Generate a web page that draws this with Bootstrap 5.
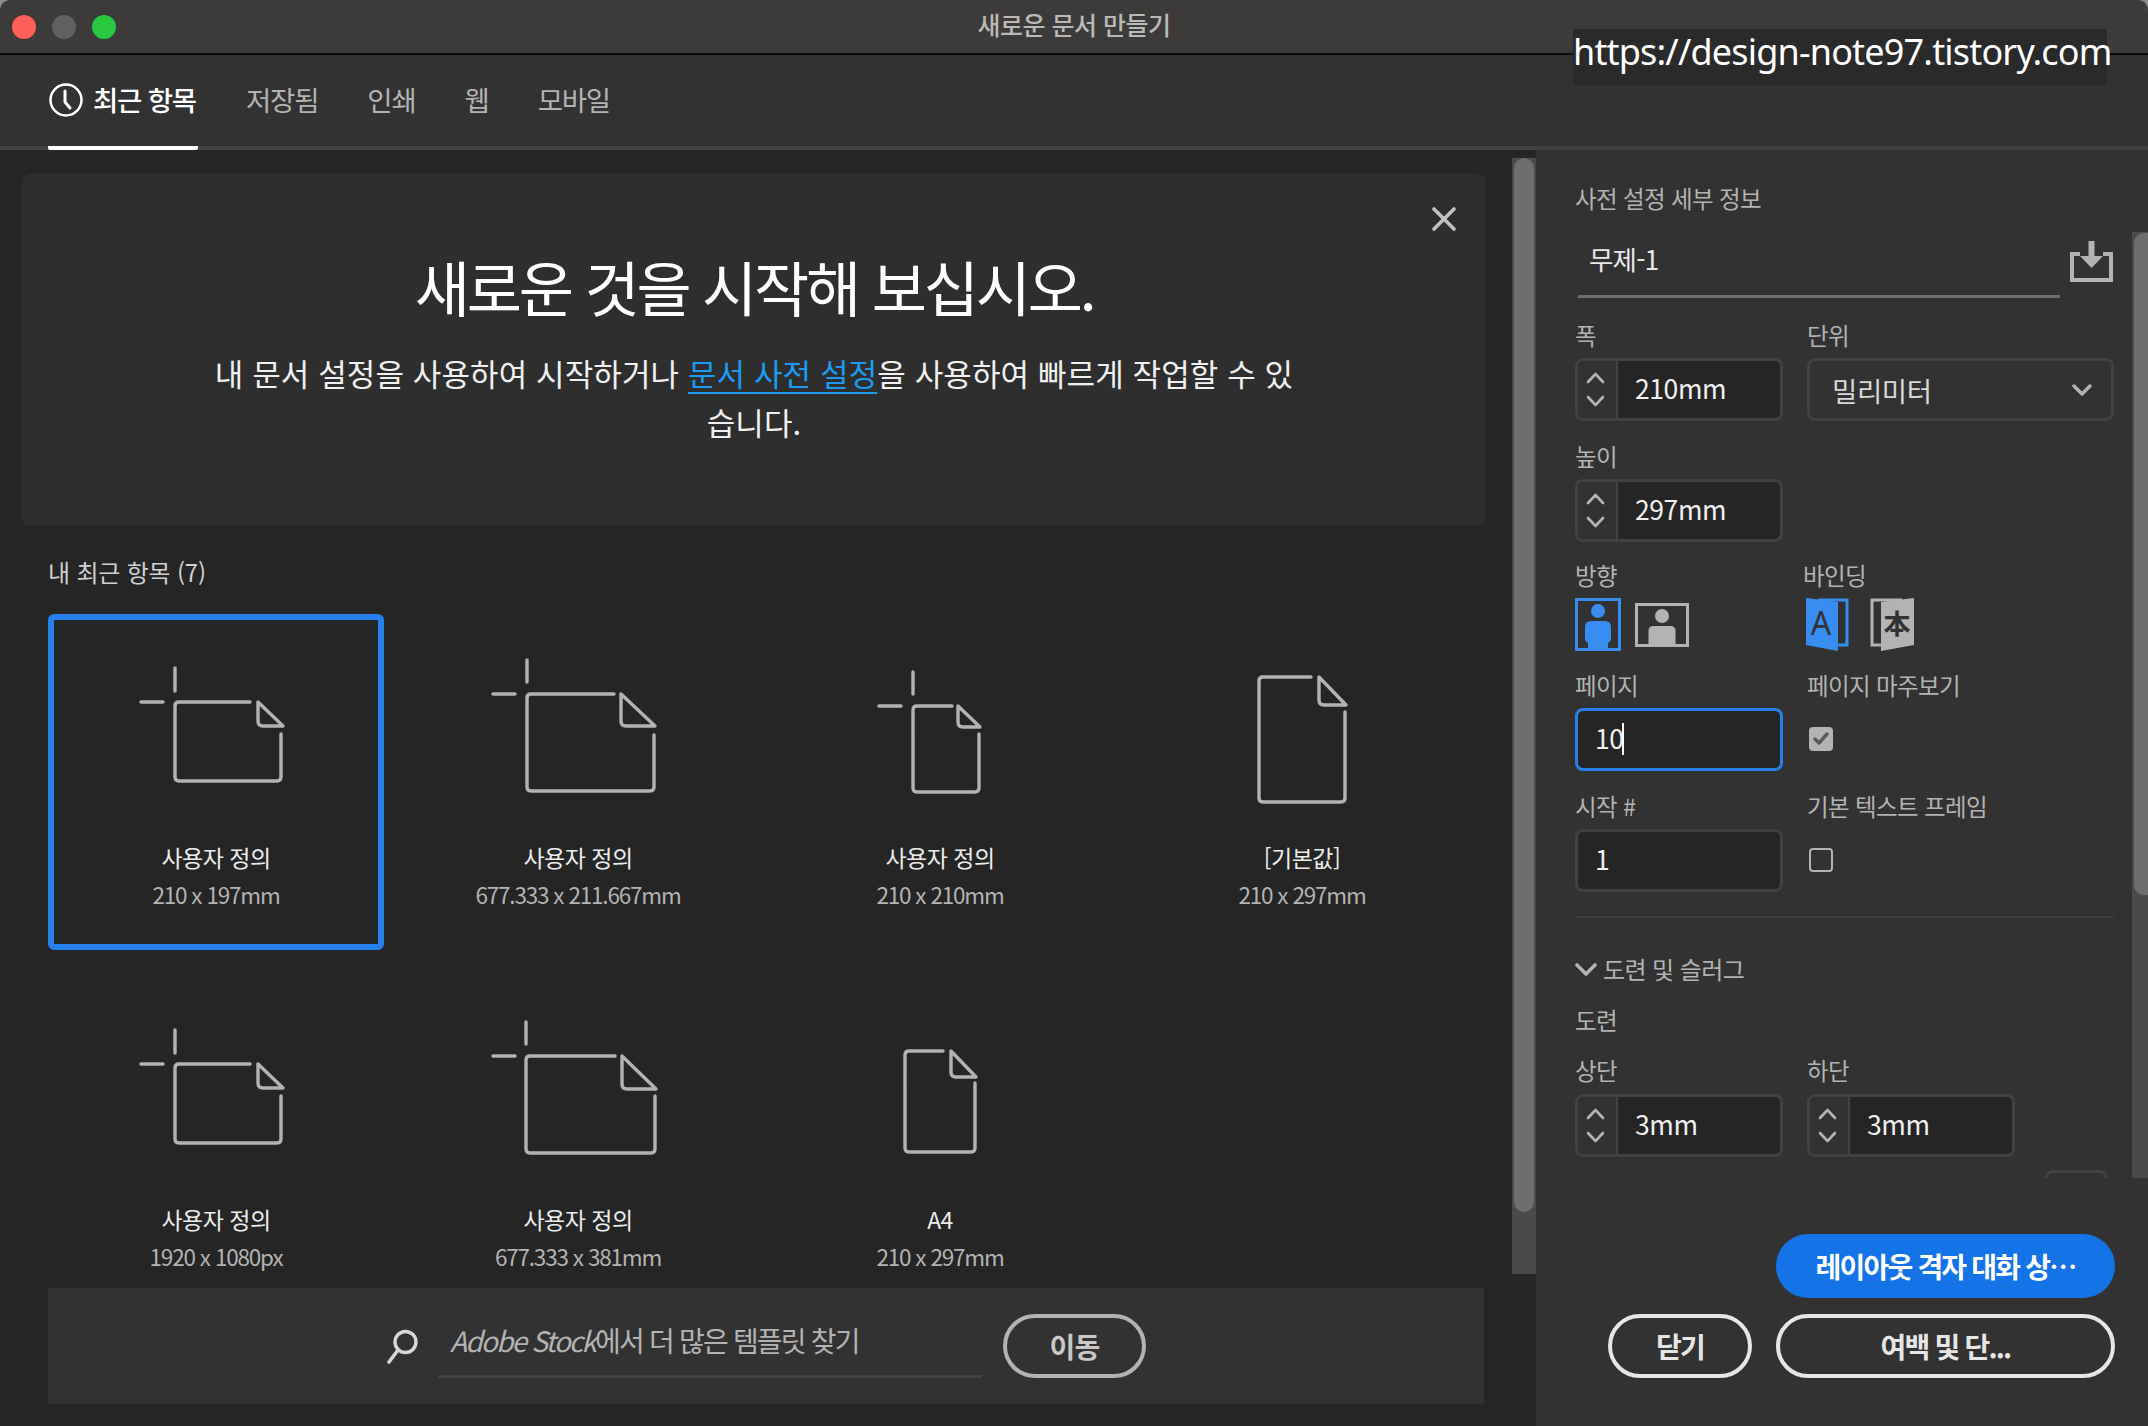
<!DOCTYPE html>
<html lang="ko">
<head>
<meta charset="utf-8">
<title>새로운 문서 만들기</title>
<link href="https://cdn.jsdelivr.net/npm/bootstrap@5.3.0/dist/css/bootstrap.min.css" rel="stylesheet">
<style>
html,body{height:1426px;overflow:hidden;background:#8a8a8a;}
body{font-family:"Noto Sans CJK KR","Noto Sans",sans-serif;color:#b3b3b3;}
.appwin{height:1426px;}
.titlebar{height:55px;background:#3c3b39;border-bottom:2px solid #0c0c0c;border-radius:10px 10px 0 0;padding-left:12px;gap:16px;}
.light{width:24px;height:24px;border-radius:50%;}
.l-red{background:#ff5f57;}.l-gray{background:#616161;}.l-green{background:#28c840;}
.wintitle{left:0;right:0;top:9px;text-align:center;font-size:25px;line-height:30px;font-weight:500;color:#b9b9b9;letter-spacing:-.5px;}
.stamp{top:29px;left:1573px;width:534px;height:56px;background:#2a2a2a;color:#fff;font-family:"Noto Sans",sans-serif;font-size:36px;line-height:46px;letter-spacing:-.82px;white-space:nowrap;text-align:center;}
.tabsbar{height:95px;background:#323232;border-bottom:4px solid #414141;padding-left:48px;}
.tabitem{height:95px;margin-bottom:-4px;font-size:27.5px;letter-spacing:-1.2px;color:#b3b3b3;margin-right:49px;gap:10px;padding-bottom:6px;}
.tabitem.on{color:#fff;border-bottom:4px solid #fff;border-radius:0 0 2px 2px;font-weight:500;margin-right:48px;padding-left:1px;padding-bottom:2px;width:150px;}
.mainrow{height:1276px;}
.leftside{width:1536px;background:#252525;}
.leftcol{width:1512px;}
.hero{margin:24px 26px 0 22px;height:352px;background:#2e2e2e;border-radius:8px;padding-top:77px;text-align:center;}
.hero h1{font-size:60px;line-height:70px;font-weight:400;color:#fff;letter-spacing:-3.2px;margin:0 0 27px;}
.hero p{font-size:31px;line-height:49px;color:#f0f0f0;margin:0;letter-spacing:.1px;}
.hero a{color:#1b9cf2;text-decoration-thickness:2px;text-underline-offset:6px;}
.closex{top:33px;right:30px;width:24px;height:24px;}
.recent{margin:31px 0 0 48px;font-size:24px;line-height:30px;letter-spacing:-.2px;color:#d0d0d0;}
.tplgrid{display:grid;grid-template-columns:repeat(4,336px);grid-auto-rows:336px;gap:26px;margin:27px 0 0 48px;height:674px;overflow:hidden;}
.tpl{border:6px solid transparent;border-radius:6px;text-align:center;}
.tpl.sel{border-color:#2680eb;}
.tpl svg{display:block;width:324px;height:206px;}
.tplname{font-size:23px;line-height:30px;color:#ececec;letter-spacing:-.5px;margin-top:16px;}
.tplsize{font-size:22.5px;line-height:30px;color:#b3b3b3;letter-spacing:-1.2px;margin-top:7px;}
.stockbar{position:absolute;left:48px;top:1138px;width:1436px;height:116px;background:#323232;}
.stockglass{margin-left:338px;flex:none;}
.stocktext{margin-left:16px;width:544px;height:64px;border-bottom:3px solid #414141;font-size:28px;letter-spacing:-1.8px;color:#b3b3b3;padding:0 0 0 12px;line-height:52px;}
.pillbtn{border-radius:32px;height:64px;font-weight:700;font-size:28px;letter-spacing:-1.8px;padding:0;line-height:1;flex:none;}
.pill-go{width:143px;margin-left:21px;border:4px solid #b3b3b3;color:#c8c8c8;background:transparent;letter-spacing:-.7px;}
.pill-line{border:4px solid #e6e6e6;color:#e6e6e6;background:transparent;}
.pill-blue{background:#1473e6;border:0;color:#fff;}
.lscroll{width:24px;margin-top:8px;height:1116px;background:#4a4a4a;}
.lthumb{height:1054px;background:#6e6e6e;border-radius:10px;margin:0 2px;}
.rightside{width:612px;background:#323232;}
.rform{height:1028px;overflow:hidden;padding-left:39px;width:596px;}
.rscroll{width:16px;margin-top:82px;height:946px;background:#4a4a4a;padding-left:2px;padding-top:1px;}
.rthumb{width:14px;height:662px;background:#6e6e6e;border-radius:10px 0 0 10px;}
.flabel{font-size:23.5px;line-height:30px;letter-spacing:-.6px;color:#b3b3b3;}
.presethead{margin-top:33px;}
.nameline{height:70px;margin-top:15px;}
.nameinput{width:482px;margin-left:3px;height:70px;border-bottom:3px solid #6e6e6e;padding-left:11px;font-size:26.5px;line-height:62px;color:#e8e8e8;letter-spacing:-.8px;}
.savebtn{width:43px;height:41px;margin-left:10px;margin-top:13px;flex:none;}
.fieldrow{display:grid;grid-template-columns:208px 307px;column-gap:24px;}
.fieldrow .flabel{margin-bottom:8px;}
.row-first{margin-top:22px;}
.row-orient{margin-top:18px;}
.row-page{margin-top:7px;}
.row-bleed{margin-top:20px;}
.row-bleed .flabel{margin-bottom:9px;}
.fbox{height:63px;border:3px solid #414141;border-radius:8px;background:#252525;display:flex;overflow:hidden;}
.fbox-short{width:208px;}
.stepper{width:40px;background:#323232;border-right:2px solid #414141;flex:none;}
.stepper svg{display:block;}
.fval{font-size:26.5px;line-height:54px;color:#f0f0f0;padding-left:17px;letter-spacing:-.4px;}
.fbox.focusbox{border-color:#2680eb;}
.caretmark{display:inline-block;width:2px;height:32px;background:#fff;vertical-align:-6px;margin-left:-2px;}
.selbox{background:transparent;padding:0 19px 0 22px;}
.selbox .fval{padding:0;font-size:27.5px;color:#d8d8d8;}
.pad-m{margin-top:20px;}
.iconrow{height:65px;margin-top:6px;}
.icon-land{margin-left:14px;margin-top:5px;}
.bind-label{margin-left:-4px;}
.icon-bind1{margin-left:-1px;}
.icon-bind2{margin-left:20px;}
.ckbox{width:24px;height:24px;border-radius:4px;margin:27px 0 0 2px;}
.ckon{background:#b3b3b3;}
.ckoff{border:2px solid #b3b3b3;}
.hrule{height:2px;background:#3e3e3e;margin:24px 0 0;width:539px;}
.section{margin-top:36px;color:#b3b3b3;font-size:24px;line-height:30px;letter-spacing:-.6px;gap:6px;}
.bleedhead{margin-top:21px;}
.stub{position:absolute;left:509px;top:1020px;width:63px;height:30px;border:3px solid #414141;border-radius:8px;background:#323232;}
.actions{padding:56px 33px 0 0;gap:16px;}
.w-main{width:339px;}
.w-close{width:144px;}
.actrow2{gap:24px;}
</style>
</head>
<body>
<div class="appwin d-flex flex-column position-relative">
  <div class="titlebar d-flex align-items-center flex-shrink-0 position-relative">
    <span class="light l-red"></span><span class="light l-gray"></span><span class="light l-green"></span>
    <div class="wintitle position-absolute">새로운 문서 만들기</div>
  </div>
  <div class="stamp position-absolute">https://design-note97.tistory.com</div>
  <div class="tabsbar d-flex align-items-start flex-shrink-0">
    <div class="tabitem on d-flex align-items-center">
      <svg width="34" height="34" viewBox="0 0 34 34" fill="none" stroke="#fff"><circle cx="17" cy="17" r="15.500" stroke-width="2.5"/><path d="M16 8v11l5 6" stroke-width="3" stroke-linecap="round" stroke-linejoin="round"/></svg>
      <span>최근 항목</span>
    </div>
    <div class="tabitem d-flex align-items-center">저장됨</div>
    <div class="tabitem d-flex align-items-center">인쇄</div>
    <div class="tabitem d-flex align-items-center">웹</div>
    <div class="tabitem d-flex align-items-center">모바일</div>
  </div>
  <div class="mainrow d-flex position-relative">
    <div class="leftside d-flex">
      <div class="leftcol position-relative">
        <div class="hero position-relative">
          <h1>새로운 것을 시작해 보십시오.</h1>
          <p>내 문서 설정을 사용하여 시작하거나 <a href="#">문서 사전 설정</a>을 사용하여 빠르게 작업할 수 있<br>습니다.</p>
          <svg class="closex position-absolute" viewBox="0 0 24 24" stroke="#c0c0c0" stroke-width="3.6" stroke-linecap="round"><path d="M2 2l20 20M22 2L2 22"/></svg>
        </div>
        <div class="recent">내 최근 항목 (7)</div>
        <div class="tplgrid">
          <div class="tpl sel">
            <svg viewBox="54 620 324 206" fill="none" stroke="#b3b3b3" stroke-width="3.4" stroke-linecap="round" stroke-linejoin="round"><path d="M175 668v23M141 702h22M250 702h-71q-4 0-4 4v71q0 4 4 4h98q4 0 4-4v-43M258 702v19q0 5 5 5h20z"/></svg>
            <div class="tplname">사용자 정의</div><div class="tplsize">210 x 197mm</div>
          </div>
          <div class="tpl">
            <svg viewBox="416 620 324 206" fill="none" stroke="#b3b3b3" stroke-width="3.4" stroke-linecap="round" stroke-linejoin="round"><path d="M527 660v22M493 694h22M614 694h-83q-4 0-4 4v89q0 4 4 4h119q4 0 4-4v-52M621 694v27q0 5 5 5h29z"/></svg>
            <div class="tplname">사용자 정의</div><div class="tplsize">677.333 x 211.667mm</div>
          </div>
          <div class="tpl">
            <svg viewBox="778 620 324 206" fill="none" stroke="#b3b3b3" stroke-width="3.4" stroke-linecap="round" stroke-linejoin="round"><path d="M913 672v22M879 706h22M952 706h-35q-4 0-4 4v78q0 4 4 4h58q4 0 4-4v-54M958 706v16q0 5 5 5h17z"/></svg>
            <div class="tplname">사용자 정의</div><div class="tplsize">210 x 210mm</div>
          </div>
          <div class="tpl">
            <svg viewBox="1140 620 324 206" fill="none" stroke="#b3b3b3" stroke-width="3.4" stroke-linecap="round" stroke-linejoin="round"><path d="M1311 677h-48q-4 0-4 4v117q0 4 4 4h78q4 0 4-4v-86M1319 677v23q0 5 5 5h22z"/></svg>
            <div class="tplname">[기본값]</div><div class="tplsize">210 x 297mm</div>
          </div>
          <div class="tpl">
            <svg viewBox="54 982 324 206" fill="none" stroke="#b3b3b3" stroke-width="3.4" stroke-linecap="round" stroke-linejoin="round"><path d="M175 1030v23M141 1064h22M250 1064h-71q-4 0-4 4v71q0 4 4 4h98q4 0 4-4v-43M258 1064v19q0 5 5 5h20z"/></svg>
            <div class="tplname">사용자 정의</div><div class="tplsize">1920 x 1080px</div>
          </div>
          <div class="tpl">
            <svg viewBox="416 982 324 206" fill="none" stroke="#b3b3b3" stroke-width="3.4" stroke-linecap="round" stroke-linejoin="round"><path d="M526 1022v22M493 1056h22M615 1056h-85q-4 0-4 4v89q0 4 4 4h121q4 0 4-4v-53M622 1056v28q0 5 5 5h29z"/></svg>
            <div class="tplname">사용자 정의</div><div class="tplsize">677.333 x 381mm</div>
          </div>
          <div class="tpl">
            <svg viewBox="778 982 324 206" fill="none" stroke="#b3b3b3" stroke-width="3.4" stroke-linecap="round" stroke-linejoin="round"><path d="M943 1051h-34q-4 0-4 4v93q0 4 4 4h62q4 0 4-4v-65M951 1051v21q0 5 5 5h20z"/></svg>
            <div class="tplname">A4</div><div class="tplsize">210 x 297mm</div>
          </div>
        </div>
      </div>
      <div class="lscroll"><div class="lthumb"></div></div>
      <div class="stockbar d-flex align-items-center">
        <svg class="stockglass" width="36" height="36" viewBox="0 0 36 36" fill="none" stroke="#d8d8d8" stroke-linecap="round"><circle cx="19.500" cy="14" r="10.500" stroke-width="3.4"/><path d="M12 22L3 34" stroke-width="3.6"/></svg>
        <div class="stocktext"><i>Adobe Stock</i>에서 더 많은 템플릿 찾기</div>
        <button class="btn pillbtn pill-go">이동</button>
      </div>
    </div>
    <div class="rightside position-relative">
      <div class="d-flex">
        <div class="rform position-relative">
          <div class="flabel presethead">사전 설정 세부 정보</div>
          <div class="nameline d-flex">
            <div class="nameinput">무제-1</div>
            <svg class="savebtn" viewBox="0 0 43 41" fill="none" stroke="#b3b3b3"><path d="M10 13H2v26h39V13h-8" stroke-width="4"/><path d="M21.500 0v18" stroke-width="6"/><path d="M10 15h23L21.500 27z" fill="#b3b3b3" stroke="none"/></svg>
          </div>
          <div class="fieldrow row-first">
            <div><div class="flabel">폭</div>
              <div class="fbox"><div class="stepper"><svg width="38" height="57" viewBox="0 0 38 57" fill="none" stroke="#b3b3b3" stroke-width="2.6" stroke-linecap="round" stroke-linejoin="round"><path d="M10 21l7.500-8 7.500 8M10 36l7.500 8 7.500-8"/></svg></div><div class="fval">210mm</div></div></div>
            <div><div class="flabel">단위</div>
              <div class="fbox selbox justify-content-between align-items-center"><div class="fval">밀리미터</div><svg width="20" height="14" viewBox="0 0 20 14" fill="none" stroke="#b3b3b3" stroke-width="3.4" stroke-linecap="round" stroke-linejoin="round"><path d="M2 3l8 8 8-8"/></svg></div></div>
          </div>
          <div class="fieldrow pad-m">
            <div><div class="flabel">높이</div>
              <div class="fbox"><div class="stepper"><svg width="38" height="57" viewBox="0 0 38 57" fill="none" stroke="#b3b3b3" stroke-width="2.6" stroke-linecap="round" stroke-linejoin="round"><path d="M10 21l7.500-8 7.500 8M10 36l7.500 8 7.500-8"/></svg></div><div class="fval">297mm</div></div></div>
          </div>
          <div class="fieldrow row-orient">
            <div><div class="flabel">방향</div>
              <div class="iconrow d-flex align-items-start">
                <svg width="46" height="53" viewBox="0 0 46 53"><rect x="1.500" y="1.500" width="43" height="50" fill="none" stroke="#378ef0" stroke-width="3"/><circle cx="23" cy="13" r="7" fill="#378ef0"/><path d="M10 29q0-6 6-6h14q6 0 6 6v11q0 4-3 5v6H13v-6q-3-1-3-5z" fill="#378ef0"/></svg>
                <svg class="icon-land" width="54" height="44" viewBox="0 0 54 44"><rect x="1.500" y="1.500" width="51" height="41" fill="none" stroke="#b3b3b3" stroke-width="3"/><circle cx="27" cy="13" r="7" fill="#b3b3b3"/><path d="M13.500 42V28q0-5 5-5h17q5 0 5 5v14z" fill="#b3b3b3"/></svg>
              </div></div>
            <div><div class="flabel bind-label">바인딩</div>
              <div class="iconrow d-flex align-items-start">
                <svg class="icon-bind1" width="44" height="53" viewBox="0 0 44 53"><path d="M12 2h29v45H30" fill="none" stroke="#378ef0" stroke-width="3"/><path d="M0 0l32 4v49L0 47z" fill="#378ef0"/><text x="15" y="37" text-anchor="middle" font-family="Noto Sans" font-size="32" fill="#323232">A</text></svg>
                <svg class="icon-bind2" width="44" height="53" viewBox="0 0 44 53"><path d="M32 2H2v45h12" fill="none" stroke="#b3b3b3" stroke-width="3"/><path d="M44 0L11 4v49l33-6z" fill="#b3b3b3"/><text x="27" y="36" text-anchor="middle" font-family="Noto Sans CJK SC" font-size="27" font-weight="700" fill="#323232">本</text></svg>
              </div></div>
          </div>
          <div class="fieldrow row-page">
            <div><div class="flabel">페이지</div>
              <div class="fbox focusbox"><div class="fval">10<span class="caretmark"></span></div></div></div>
            <div><div class="flabel">페이지 마주보기</div>
              <div class="ckbox ckon d-flex align-items-center justify-content-center"><svg width="16" height="14" viewBox="0 0 16 14" fill="none" stroke="#5a5a5a" stroke-width="3.4" stroke-linecap="round" stroke-linejoin="round"><path d="M2 7l4 4 8-9"/></svg></div></div>
          </div>
          <div class="fieldrow pad-m">
            <div><div class="flabel">시작 #</div>
              <div class="fbox"><div class="fval">1</div></div></div>
            <div><div class="flabel">기본 텍스트 프레임</div>
              <div class="ckbox ckoff"></div></div>
          </div>
          <div class="hrule"></div>
          <div class="section d-flex align-items-center">
            <svg width="22" height="14" viewBox="0 0 22 14" fill="none" stroke="#b3b3b3" stroke-width="3.6" stroke-linecap="round" stroke-linejoin="round"><path d="M2 3l9 9 9-9"/></svg>
            <span>도련 및 슬러그</span>
          </div>
          <div class="flabel bleedhead">도련</div>
          <div class="fieldrow row-bleed">
            <div><div class="flabel">상단</div>
              <div class="fbox"><div class="stepper"><svg width="38" height="57" viewBox="0 0 38 57" fill="none" stroke="#b3b3b3" stroke-width="2.6" stroke-linecap="round" stroke-linejoin="round"><path d="M10 21l7.500-8 7.500 8M10 36l7.500 8 7.500-8"/></svg></div><div class="fval">3mm</div></div></div>
            <div><div class="flabel">하단</div>
              <div class="fbox fbox-short"><div class="stepper"><svg width="38" height="57" viewBox="0 0 38 57" fill="none" stroke="#b3b3b3" stroke-width="2.6" stroke-linecap="round" stroke-linejoin="round"><path d="M10 21l7.500-8 7.500 8M10 36l7.500 8 7.500-8"/></svg></div><div class="fval">3mm</div></div></div>
          </div>
          <div class="stub"></div>
        </div>
        <div class="rscroll"><div class="rthumb"></div></div>
      </div>
      <div class="actions d-flex flex-column align-items-end">
        <button class="btn pillbtn pill-blue w-main">레이아웃 격자 대화 상…</button>
        <div class="d-flex actrow2">
          <button class="btn pillbtn pill-line w-close">닫기</button>
          <button class="btn pillbtn pill-line w-main">여백 및 단...</button>
        </div>
      </div>
    </div>
  </div>
</div>
</body>
</html>
